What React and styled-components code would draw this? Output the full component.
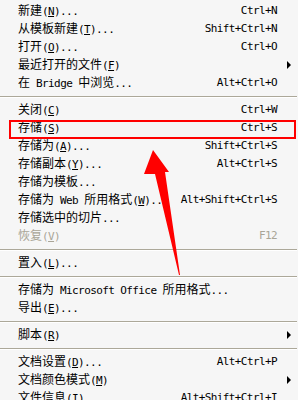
import React from "react";
import styled, { createGlobalStyle } from "styled-components";

const GlobalStyle = createGlobalStyle`
  html, body {
    margin: 0;
    padding: 0;
    background: #f6f6f6;
    overflow: hidden;
  }
`;

const Menu = styled.div`
  position: relative;
  width: 298px;
  height: 400px;
  overflow: hidden;
  box-sizing: border-box;
  padding-top: 2px;
  background: #f6f6f6;
  font-family: "Noto Sans CJK SC", "Noto Sans", sans-serif;
  font-size: 12px;
  color: #000;
`;

const Row = styled.div`
  display: grid;
  grid-template-columns: 1fr auto 14px;
  align-items: center;
  height: 18px;
  line-height: 18px;
  padding: 0 7px 0 18px;
  white-space: nowrap;
  color: ${(p) => (p.$disabled ? "#a9a597" : "#000")};
`;

const Label = styled.span`
  overflow: hidden;
`;

const Latin = styled.span`
  font-family: "DejaVu Sans Mono", "Liberation Mono", monospace;
  font-size: 11px;
  letter-spacing: -0.6px;
`;

const Mnemonic = styled.span`
  text-decoration: underline;
  text-underline-offset: 1px;
`;

const Shortcut = styled.span`
  justify-self: end;
  font-family: "DejaVu Sans Mono", "Liberation Mono", monospace;
  font-size: 11px;
  letter-spacing: -0.6px;
`;

const SubArrow = styled.span`
  justify-self: end;
  width: 0;
  height: 0;
  border-left: 4px solid #000;
  border-top: 4px solid transparent;
  border-bottom: 4px solid transparent;
`;

const Separator = styled.div`
  margin: 4px 1px 3px 0;
  border-top: 1px solid #aca899;
  border-bottom: 1px solid #ffffff;
`;

const Highlight = styled.div`
  position: absolute;
  left: 9px;
  top: 120px;
  width: 287px;
  height: 19px;
  box-sizing: border-box;
  border: 2px solid #ff0000;
  pointer-events: none;
`;

const ArrowLayer = styled.svg`
  position: absolute;
  left: 0;
  top: 0;
  pointer-events: none;
`;

function renderAscii(text, keyBase) {
  const bits = text.split(/&(.)/);
  return bits.map((b, i) =>
    i % 2 === 1 ? <Mnemonic key={keyBase + "-" + i}>{b}</Mnemonic> : b
  );
}

function renderLabel(str) {
  const parts = str.split(/([\x00-\x7f]+)/).filter(Boolean);
  return parts.map((p, i) =>
    /^[\x00-\x7f]+$/.test(p) ? (
      <Latin key={i}>{renderAscii(p, i)}</Latin>
    ) : (
      <span key={i}>{p}</span>
    )
  );
}

const items = [
  { label: "新建(&N)...", shortcut: "Ctrl+N" },
  { label: "从模板新建(&T)...", shortcut: "Shift+Ctrl+N" },
  { label: "打开(&O)...", shortcut: "Ctrl+O" },
  { label: "最近打开的文件(&F)", sub: true },
  { label: "在 Bridge 中浏览...", shortcut: "Alt+Ctrl+O" },
  { sep: true },
  { label: "关闭(&C)", shortcut: "Ctrl+W" },
  { label: "存储(&S)", shortcut: "Ctrl+S" },
  { label: "存储为(&A)...", shortcut: "Shift+Ctrl+S" },
  { label: "存储副本(&Y)...", shortcut: "Alt+Ctrl+S" },
  { label: "存储为模板..." },
  { label: "存储为 Web 所用格式(&W)...", shortcut: "Alt+Shift+Ctrl+S" },
  { label: "存储选中的切片..." },
  { label: "恢复(&V)", shortcut: "F12", disabled: true },
  { sep: true },
  { label: "置入(&L)..." },
  { sep: true },
  { label: "存储为 Microsoft Office 所用格式..." },
  { label: "导出(&E)..." },
  { sep: true },
  { label: "脚本(&R)", sub: true },
  { sep: true },
  { label: "文档设置(&D)...", shortcut: "Alt+Ctrl+P" },
  { label: "文档颜色模式(&M)", sub: true },
  { label: "文件信息(&I)...", shortcut: "Alt+Shift+Ctrl+I" },
];

export default function App() {
  return (
    <>
      <GlobalStyle />
      <Menu>
        {items.map((it, i) =>
          it.sep ? (
            <Separator key={i} />
          ) : (
            <Row key={i} $disabled={it.disabled}>
              <Label>{renderLabel(it.label)}</Label>
              <Shortcut>{it.shortcut || ""}</Shortcut>
              {it.sub ? <SubArrow /> : <span />}
            </Row>
          )
        )}
        <Highlight />
        <ArrowLayer width="298" height="400" viewBox="0 0 298 400">
          <polygon
            points="153,150 169,172 165,172 180,275 179,275 155,174 144,174"
            fill="#ff0000"
          />
        </ArrowLayer>
      </Menu>
    </>
  );
}
